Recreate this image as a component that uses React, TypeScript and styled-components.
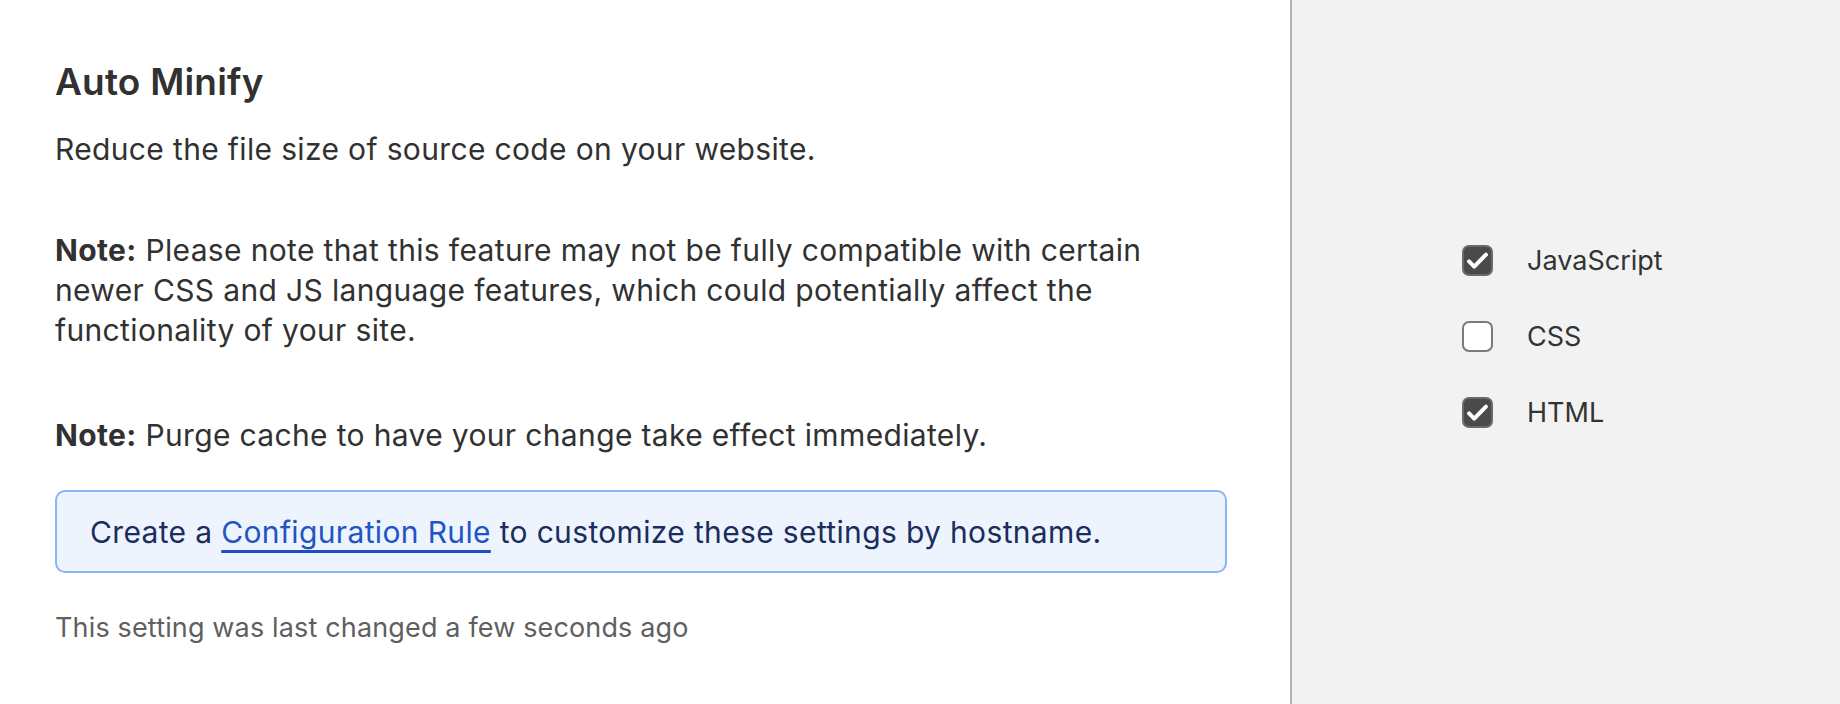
import React from "react";
import styled, { createGlobalStyle } from "styled-components";

const Global = createGlobalStyle`
  html, body { margin: 0; padding: 0; }
  body { font-family: Inter, "Noto Sans", "Liberation Sans", sans-serif; background: #fff; }
`;

const Page = styled.div`
  display: flex;
  width: 1840px;
  height: 704px;
  overflow: hidden;
`;

const Main = styled.section`
  width: 1292px;
  flex-shrink: 0;
  box-sizing: border-box;
  padding: 58px 63px 0 55px;
  background: #ffffff;
  border-right: 2px solid #b2b2b2;
  color: #313131;
`;

const Title = styled.h2`
  margin: 0;
  font-size: 37px;
  line-height: 48px;
  font-weight: 600;
  letter-spacing: 0.2px;
  color: #313131;
`;

const Para = styled.p<{ $top: number }>`
  margin: ${(p) => p.$top}px 0 0;
  font-size: 30px;
  line-height: 40px;
  letter-spacing: 0.35px;
  font-weight: 400;
`;

const Strong = styled.strong`
  font-weight: 700;
`;

const InfoBox = styled.div`
  margin-top: 35px;
  border: 2px solid #8ab4f8;
  border-radius: 10px;
  background: #edf4fe;
  padding: 20px 33px 19px;
  font-size: 30px;
  line-height: 40px;
  letter-spacing: 0.35px;
  color: #1a2d5c;
`;

const Link = styled.a`
  color: #2155c4;
  text-decoration: underline;
  text-decoration-thickness: 3px;
  text-underline-offset: 7px;
  text-decoration-color: #1f4fc0;
  cursor: pointer;
`;

const Footer = styled.div`
  margin-top: 39px;
  font-size: 27px;
  line-height: 32px;
  letter-spacing: 0.15px;
  color: #5f5f5f;
`;

const Side = styled.aside`
  flex: 1;
  background: #f2f2f2;
  padding: 245px 0 0 170px;
  display: flex;
  flex-direction: column;
  gap: 45px;
`;

const Option = styled.label`
  display: flex;
  align-items: center;
  gap: 34px;
  height: 31px;
  font-size: 27px;
  color: #333333;
  cursor: pointer;
`;

const Box = styled.span<{ $checked: boolean }>`
  width: 31px;
  height: 31px;
  box-sizing: border-box;
  border-radius: 7px;
  border: 2px solid ${(p) => (p.$checked ? "#6a6a6a" : "#7a7a7a")};
  background: ${(p) => (p.$checked ? "#4a4a4a" : "#ffffff")};
  display: flex;
  align-items: center;
  justify-content: center;
  flex-shrink: 0;
`;

const Check = () => (
  <svg width="27" height="27" viewBox="0 0 24 24" fill="none">
    <path d="M4.5 12.8l4.6 4.6L19.5 6.8" stroke="#ffffff" strokeWidth="3.6" strokeLinecap="round" strokeLinejoin="round" />
  </svg>
);

const options = [
  { label: "JavaScript", checked: true },
  { label: "CSS", checked: false },
  { label: "HTML", checked: true },
];

export default function App() {
  return (
    <>
      <Global />
      <Page>
        <Main>
          <Title>Auto Minify</Title>
          <Para $top={23}>Reduce the file size of source code on your website.</Para>
          <Para $top={61}>
            <Strong>Note:</Strong> Please note that this feature may not be fully compatible with certain
            <br />
            newer CSS and JS language features, which could potentially affect the
            <br />
            functionality of your site.
          </Para>
          <Para $top={65}>
            <Strong>Note:</Strong> Purge cache to have your change take effect immediately.
          </Para>
          <InfoBox>
            Create a <Link>Configuration Rule</Link> to customize these settings by hostname.
          </InfoBox>
          <Footer>This setting was last changed a few seconds ago</Footer>
        </Main>
        <Side>
          {options.map((o) => (
            <Option key={o.label}>
              <Box $checked={o.checked}>{o.checked && <Check />}</Box>
              {o.label}
            </Option>
          ))}
        </Side>
      </Page>
    </>
  );
}
